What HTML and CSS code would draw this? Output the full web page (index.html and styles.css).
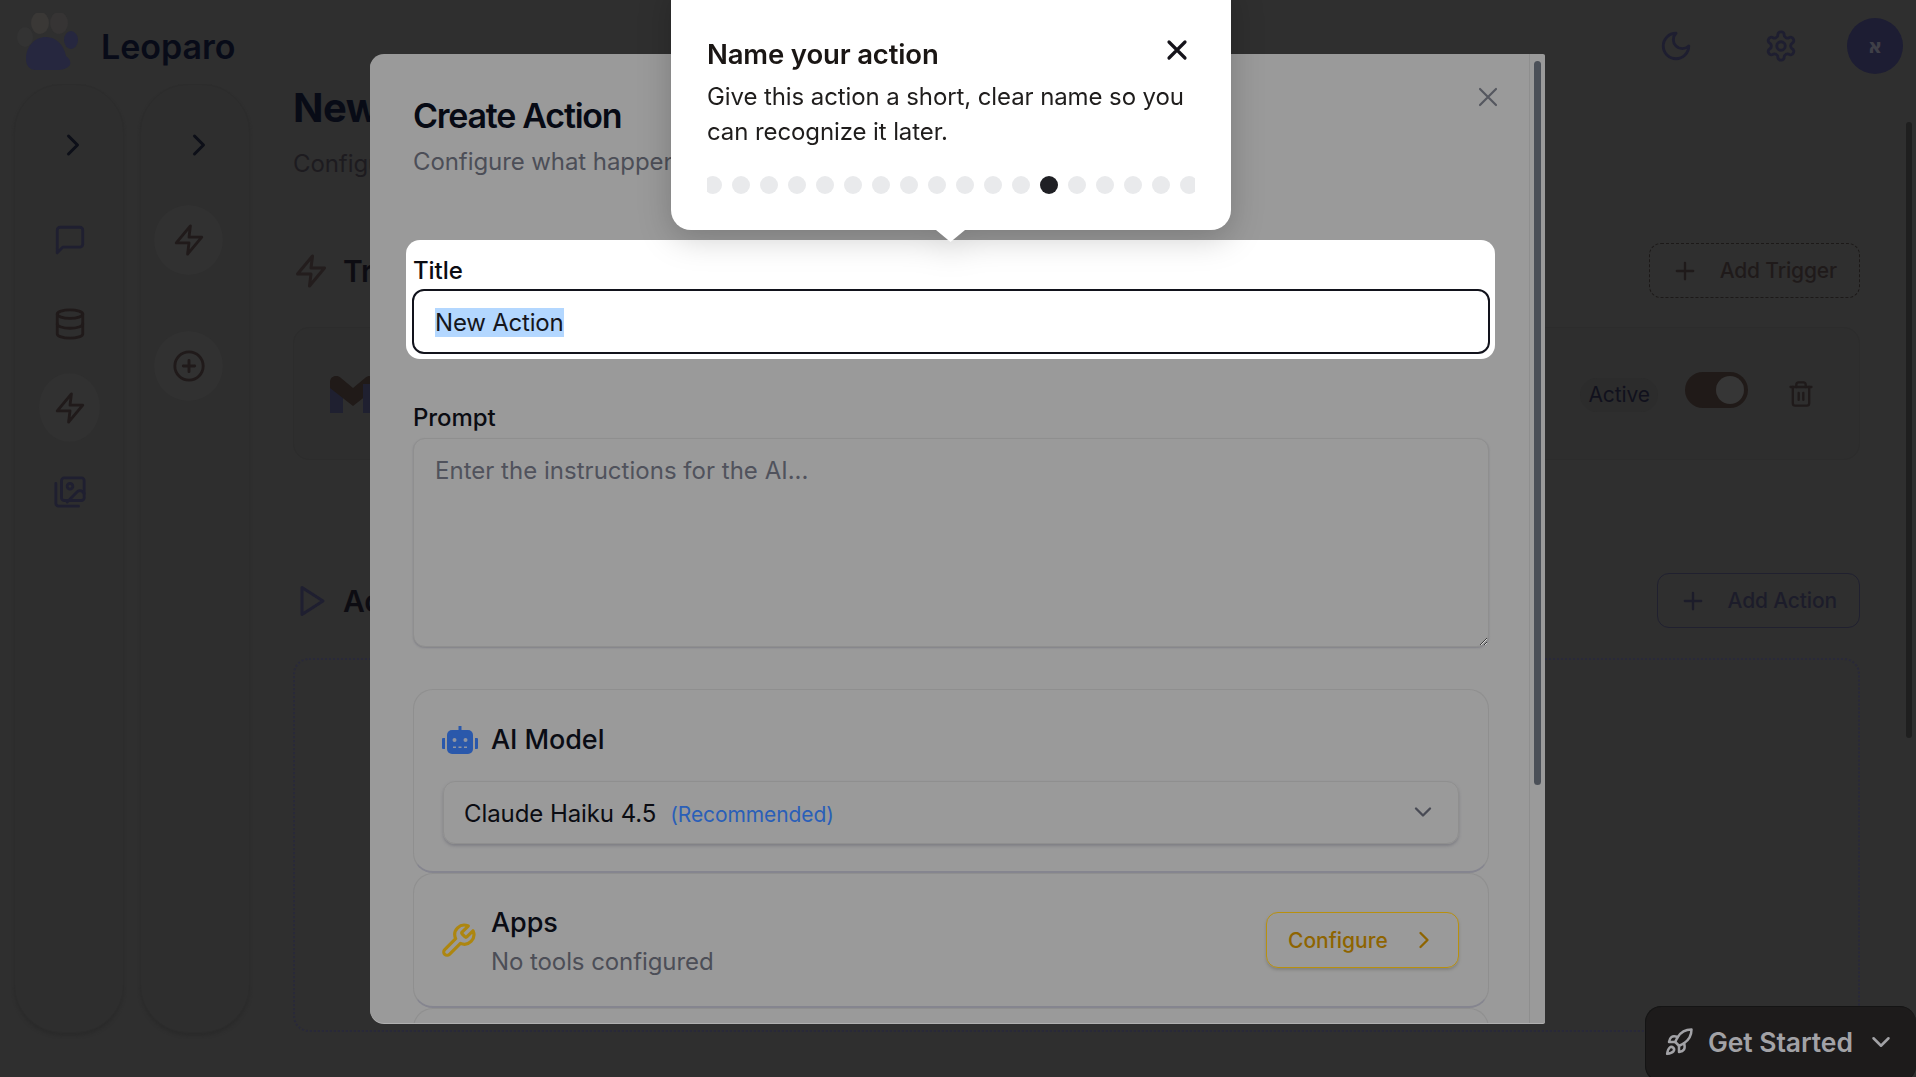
FILE: index.html
```html
<!DOCTYPE html>
<html lang="en">
<head>
<meta charset="utf-8">
<title>Leoparo - Create Action</title>
<link rel="stylesheet" href="styles.css">
</head>
<body>
<header class="topbar">
  <div class="brand">
    <svg class="paw" viewBox="0 0 62 58"><ellipse class="paw-dim" cx="9" cy="24" rx="8" ry="10"/><ellipse class="paw-toe" cx="24" cy="10" rx="9" ry="11"/><ellipse class="paw-toe2" cx="43" cy="10" rx="9" ry="11"/><ellipse class="paw-blue" cx="55" cy="27" rx="7" ry="9"/><path class="paw-blue" d="M10 46c0-13 9-22 20-22s18 9 20 19c4 3 5 6 4 9-3 4-8 5-14 5H20C13 57 10 52 10 46z"/></svg>
    <span class="brand-name">Leoparo</span>
  </div>
  <div class="top-actions">
    <svg class="icon top-icon" viewBox="0 0 24 24"><path d="M12 3a6 6 0 0 0 9 9 9 9 0 1 1-9-9Z"/></svg>
    <svg class="icon top-icon" viewBox="0 0 24 24"><path d="M12.22 2h-.44a2 2 0 0 0-2 2v.18a2 2 0 0 1-1 1.73l-.43.25a2 2 0 0 1-2 0l-.15-.08a2 2 0 0 0-2.73.73l-.22.38a2 2 0 0 0 .73 2.73l.15.1a2 2 0 0 1 1 1.72v.51a2 2 0 0 1-1 1.74l-.15.09a2 2 0 0 0-.73 2.73l.22.38a2 2 0 0 0 2.73.73l.15-.08a2 2 0 0 1 2 0l.43.25a2 2 0 0 1 1 1.73V20a2 2 0 0 0 2 2h.44a2 2 0 0 0 2-2v-.18a2 2 0 0 1 1-1.73l.43-.25a2 2 0 0 1 2 0l.15.08a2 2 0 0 0 2.73-.73l.22-.39a2 2 0 0 0-.73-2.73l-.15-.08a2 2 0 0 1-1-1.74v-.5a2 2 0 0 1 1-1.74l.15-.09a2 2 0 0 0 .73-2.73l-.22-.38a2 2 0 0 0-2.73-.73l-.15.08a2 2 0 0 1-2 0l-.43-.25a2 2 0 0 1-1-1.73V4a2 2 0 0 0-2-2z"/><circle cx="12" cy="12" r="3"/></svg>
    <div class="avatar">א</div>
  </div>
</header>

<div class="layout">
  <nav class="rail rail-first">
    <svg class="icon rail-toggle" viewBox="0 0 24 24"><path d="m9 18 6-6-6-6"/></svg>
    <div class="rail-items">
      <span class="rail-item"><svg class="icon" viewBox="0 0 24 24"><path d="M21 15a2 2 0 0 1-2 2H7l-4 4V5a2 2 0 0 1 2-2h14a2 2 0 0 1 2 2z"/></svg></span>
      <span class="rail-item rail-item-warm"><svg class="icon" viewBox="0 0 24 24"><ellipse cx="12" cy="5" rx="9" ry="3"/><path d="M3 5v14a9 3 0 0 0 18 0V5"/><path d="M3 12a9 3 0 0 0 18 0"/></svg></span>
      <span class="rail-item rail-item-warm is-active"><svg class="icon" viewBox="0 0 24 24"><path d="M13 2 3 14h9l-1 8 10-12h-9l1-8z"/></svg></span>
      <span class="rail-item"><svg class="icon" viewBox="0 0 24 24"><path d="M18 22H4a2 2 0 0 1-2-2V6"/><path d="m22 13-1.3-1.3a2.4 2.4 0 0 0-3.4 0L10 19"/><circle cx="12" cy="8" r="2"/><rect x="6" y="2" width="16" height="16" rx="2"/></svg></span>
    </div>
  </nav>
  <nav class="rail rail-second">
    <svg class="icon rail-toggle" viewBox="0 0 24 24"><path d="m9 18 6-6-6-6"/></svg>
    <div class="rail-items rail-items-wide">
      <span class="rail-item rail-item-warm rail-item-round is-active"><svg class="icon" viewBox="0 0 24 24"><path d="M13 2 3 14h9l-1 8 10-12h-9l1-8z"/></svg></span>
      <span class="rail-item rail-item-warm rail-item-round is-active"><svg class="icon" viewBox="0 0 24 24"><circle cx="12" cy="12" r="10"/><path d="M8 12h8M12 8v8"/></svg></span>
    </div>
  </nav>

  <main class="main">
    <h1 class="page-title">New Action</h1>
    <p class="page-sub">Configure your automation</p>

    <section class="section-head section-trigger">
      <div class="section-name">
        <svg class="icon section-icon" viewBox="0 0 24 24"><path d="M13 2 3 14h9l-1 8 10-12h-9l1-8z"/></svg>
        <h2>Triggers</h2>
      </div>
      <button class="add-btn add-trigger"><svg class="icon" viewBox="0 0 24 24"><path d="M5 12h14M12 5v14"/></svg>Add Trigger</button>
    </section>

    <div class="trigger-card">
      <svg class="gmail" viewBox="0 0 46 37"><path class="gmail-blue" d="M0 8h13v29H0z"/><path class="gmail-red" d="M0 6c0-6 7-8 11-4l12 10L35 2c4-4 11-2 11 4v6L23 30 0 12z"/><path class="gmail-blue" d="M33 8h13v29H33z"/></svg>
      <div class="trigger-controls">
        <span class="status-pill">Active</span>
        <span class="switch"><span class="switch-knob"></span></span>
        <svg class="icon trash" viewBox="0 0 24 24"><path d="M3 6h18"/><path d="M19 6v14a2 2 0 0 1-2 2H7a2 2 0 0 1-2-2V6"/><path d="M8 6V4a2 2 0 0 1 2-2h4a2 2 0 0 1 2 2v2"/><path d="M10 11v6M14 11v6"/></svg>
      </div>
    </div>

    <section class="section-head section-actions">
      <div class="section-name">
        <svg class="icon section-icon section-icon-blue" viewBox="0 0 24 24"><path d="M6 3l14 9-14 9z"/></svg>
        <h2>Actions</h2>
      </div>
      <button class="add-btn add-action"><svg class="icon" viewBox="0 0 24 24"><path d="M5 12h14M12 5v14"/></svg>Add Action</button>
    </section>

    <div class="empty-actions"></div>
  </main>
</div>

<div class="page-scroll"></div>

<aside class="get-started">
  <svg class="icon rocket" viewBox="0 0 24 24"><path d="M4.5 16.5c-1.5 1.26-2 5-2 5s3.74-.5 5-2c.71-.84.7-2.13-.09-2.91a2.18 2.18 0 0 0-2.91-.09z"/><path d="m12 15-3-3a22 22 0 0 1 2-3.95A12.88 12.88 0 0 1 22 2c0 2.72-.78 7.5-6 11a22.35 22.35 0 0 1-4 2z"/><path d="M9 12H4s.55-3.03 2-4c1.62-1.08 5 0 5 0"/><path d="M12 15v5s3.03-.55 4-2c1.08-1.62 0-5 0-5"/></svg>
  <span>Get Started</span>
  <svg class="icon gs-chevron" viewBox="0 0 24 24"><path d="m6 9 6 6 6-6"/></svg>
</aside>

<div class="modal">
  <div class="modal-body">
    <h2 class="modal-title">Create Action</h2>
    <p class="modal-sub">Configure what happens when this action runs</p>

    <div class="spotlight">
      <div class="field-label">Title</div>
      <div class="title-input"><span class="selected">New Action</span></div>
    </div>

    <div class="field-label prompt-label">Prompt</div>
    <textarea class="prompt" placeholder="Enter the instructions for the AI..."></textarea>

    <section class="option-card model-card">
      <div class="model-head">
        <svg class="robot" viewBox="0 0 36 28"><path class="robot-fill" d="M16.5 0h3v4h-3zM0 13a1 1 0 0 1 1-1h2v11H1a1 1 0 0 1-1-1zM33 12h2a1 1 0 0 1 1 1v9a1 1 0 0 1-1 1h-2z"/><rect class="robot-fill" x="5" y="4" width="26" height="24" rx="5"/><circle class="robot-face" cx="12.5" cy="14" r="2"/><circle class="robot-face" cx="23.5" cy="14" r="2"/><path class="robot-face" d="M11 20.5h3v1.5h-3zM16.5 20.5h3v1.5h-3zM22 20.5h3v1.5h-3z"/></svg>
        <span class="option-name">AI Model</span>
      </div>
      <div class="model-select">
        <span class="model-name">Claude Haiku 4.5</span>
        <span class="model-tag">(Recommended)</span>
        <svg class="icon select-chevron" viewBox="0 0 24 24"><path d="m6 9 6 6 6-6"/></svg>
      </div>
    </section>

    <section class="option-card apps-card">
      <svg class="icon wrench" viewBox="0 0 24 24"><path d="M14.7 6.3a1 1 0 0 0 0 1.4l1.6 1.6a1 1 0 0 0 1.4 0l3.77-3.77a6 6 0 0 1-7.94 7.94l-6.91 6.91a2.12 2.12 0 0 1-3-3l6.91-6.91a6 6 0 0 1 7.94-7.94l-3.76 3.76z"/></svg>
      <div class="apps-text">
        <div class="option-name">Apps</div>
        <div class="apps-sub">No tools configured</div>
      </div>
      <button class="configure">Configure<svg class="icon" viewBox="0 0 24 24"><path d="m9 18 6-6-6-6"/></svg></button>
    </section>

    <section class="option-card next-card"></section>
  </div>
  <svg class="icon modal-close" viewBox="0 0 24 24"><path d="M18 6 6 18M6 6l12 12"/></svg>
  <div class="modal-scroll"></div>
</div>

<div class="tour">
  <h3 class="tour-title">Name your action</h3>
  <p class="tour-text">Give this action a short, clear name so you can recognize it later.</p>
  <div class="tour-dots">
    <i></i><i></i><i></i><i></i><i></i><i></i><i></i><i></i><i></i><i></i><i></i><i></i><i class="on"></i><i></i><i></i><i></i><i></i><i></i>
  </div>
  <svg class="icon tour-close" viewBox="0 0 24 24"><path d="M18 6 6 18M6 6l12 12"/></svg>
</div>
</body>
</html>
```

FILE: styles.css
```css
* { box-sizing: border-box; }

html, body { margin: 0; height: 1077px; overflow: hidden; }

body {
  position: relative;
  background: #2f2f2f;
  font-family: Inter, "Noto Sans", "Liberation Sans", sans-serif;
  letter-spacing: -0.08px;
  color: #0a0c14;
}

h1, h2, h3, p { margin: 0; }

.icon {
  fill: none;
  stroke: currentColor;
  stroke-width: 2;
  stroke-linecap: round;
  stroke-linejoin: round;
  flex: none;
}

/* top bar */
.topbar {
  height: 84px;
  display: flex;
  align-items: center;
  justify-content: space-between;
  padding: 8px 13px 0 16px;
}
.brand { display: flex; align-items: center; gap: 23px; }
.paw { width: 62px; height: 58px; margin-bottom: 8px; }
.paw-dim { fill: #333333; }
.paw-toe { fill: #3a3836; }
.paw-toe2 { fill: #363434; }
.paw-blue { fill: #26273f; }
.brand-name { font-size: 34px; font-weight: 600; color: #080b18; letter-spacing: 0; }

.top-actions { display: flex; align-items: center; }
.top-icon { width: 34px; height: 34px; color: #1e1e30; margin-right: 71px; }
.top-icon + .avatar { margin-left: -22px; }
.avatar {
  width: 56px;
  height: 56px;
  border-radius: 50%;
  background: #1d1d33;
  color: #3f3f47;
  display: flex;
  align-items: center;
  justify-content: center;
  font: 600 20px "DejaVu Sans", sans-serif;
}

/* layout */
.layout { display: flex; padding-left: 14px; }

.rail {
  width: 110px;
  height: 949px;
  flex: none;
  padding-top: 36px;
  border: 1px solid #2c2c2c;
  border-radius: 48px;
  background: #2e2e2e;
  box-shadow: 0 3px 3px #2b2b2b;
}
.rail-second { margin-left: 16px; }
.rail-toggle { display: block; width: 36px; height: 48px; margin-left: 40px; color: #0d0f18; }

.rail-items { display: flex; flex-direction: column; gap: 15px; margin: 36px 0 0 24px; }
.rail-item {
  width: 61px;
  height: 69px;
  border-radius: 50%;
  display: flex;
  align-items: center;
  justify-content: center;
  color: #1f1f30;
}
.rail-item .icon { width: 34px; height: 34px; }
.rail-item-warm { color: #201a1a; }
.rail-item.is-active { background: #313131; }
.rail-items-wide { gap: 56px; margin-left: 13px; }
.rail-item-round { width: 69px; height: 70px; }

/* main */
.main { width: 1567px; margin-left: 43px; flex: none; }
.page-title { font-size: 40px; line-height: 48px; font-weight: 700; color: #080b16; letter-spacing: -0.5px; }
.page-sub { font-size: 24px; line-height: 32px; margin-top: 16px; color: #1d1b1f; }

.section-head { display: flex; align-items: center; justify-content: space-between; height: 55px; }
.section-trigger { margin-top: 63px; }
.section-actions { margin-top: 113px; }
.section-name { display: flex; align-items: center; gap: 14px; }
.section-name h2 { font-size: 30px; font-weight: 600; color: #0d0c12; }
.section-icon { width: 36px; height: 36px; color: #231d1d; }
.section-icon-blue { color: #1f1f30; }

.add-btn {
  height: 55px;
  display: flex;
  align-items: center;
  gap: 21px;
  padding: 0 22px 0 21px;
  border-radius: 12px;
  background: transparent;
  font: 500 21px Inter, sans-serif;
  letter-spacing: -0.15px;
}
.add-btn .icon { width: 28px; height: 28px; }
.add-trigger { border: 1px dashed #1c1918; color: #1f1a1a; }
.add-action { border: 1px solid #20202f; color: #1c1c2a; }

.trigger-card {
  height: 133px;
  margin-top: 29px;
  padding: 0 44px 0 36px;
  display: flex;
  align-items: center;
  justify-content: space-between;
  border: 1px solid #2c2c2c;
  border-radius: 16px;
  background: #2e2e2e;
}
.gmail { width: 46px; height: 37px; margin-top: 1px; }
.gmail-blue { fill: #1f2030; }
.gmail-red { fill: #201a18; }

.trigger-controls { display: flex; align-items: center; }
.status-pill {
  height: 34px;
  margin-top: 2px;
  padding: 0 8px;
  display: flex;
  align-items: center;
  border-radius: 17px;
  background: #2c2c2c;
  font-size: 21px;
  color: #11111d;
}
.switch {
  width: 63px;
  height: 36px;
  margin: -8px 0 0 27px;
  padding: 4px;
  display: flex;
  justify-content: flex-end;
  border-radius: 18px;
  background: #201a18;
}
.switch-knob { width: 28px; height: 28px; border-radius: 50%; background: #363636; }
.trash { width: 28px; height: 32px; margin-left: 39px; color: #1f1a1a; }

.empty-actions {
  height: 374px;
  margin-top: 30px;
  border: 2px dotted #29293a;
  border-radius: 16px;
}

.page-scroll {
  position: absolute;
  top: 122px;
  right: 4px;
  width: 6px;
  height: 616px;
  border-radius: 3px;
  background: #1f1f1f;
}

.get-started {
  position: absolute;
  right: 0;
  bottom: -5px;
  width: 271px;
  height: 76px;
  padding: 0 20px 4px 18px;
  display: flex;
  align-items: center;
  border: 1px solid #141414;
  border-right: 0;
  border-radius: 16px;
  background: #1d1b1b;
  color: #a2a2a6;
  font-size: 26.5px;
  font-weight: 600;
}
.rocket { width: 30px; height: 30px; margin-right: 14px; }
.gs-chevron { width: 30px; height: 30px; margin-left: auto; }

/* modal */
.modal {
  position: absolute;
  top: 54px;
  left: 370px;
  width: 1175px;
  height: 969px;
  overflow: hidden;
  border-radius: 14px 2px 2px 14px;
  background: #9a9a9a;
  box-shadow: 0 1px 0 #b0b0b0;
  z-index: 10;
}
.modal-body { padding: 40px 0 0 43px; width: 1119px; }
.modal-title { font-size: 34px; line-height: 44px; font-weight: 600; color: #070a14; letter-spacing: -1.25px; }
.modal-sub { font-size: 24px; line-height: 32px; margin-top: 8px; color: #4c4e57; }

.spotlight {
  width: 1089px;
  height: 119px;
  margin: 62px 0 0 -7px;
  padding: 16px 5px 5px 6px;
  border-radius: 14px;
  background: #fff;
}
.spotlight .field-label { margin-left: 1px; margin-bottom: 3px; }
.field-label { font-size: 24px; line-height: 30px; font-weight: 500; color: #0b0c12; }

.title-input {
  height: 65px;
  padding: 2px 21px 0;
  display: flex;
  align-items: center;
  border: 2px solid #12131c;
  border-radius: 12px;
  background: #fff;
  font-size: 24px;
  letter-spacing: -0.2px;
  color: #15161c;
}
.selected { background: #b3d7ff; line-height: 29px; }

.prompt-label { margin-top: 44px; }
.prompt {
  display: block;
  width: 1076px;
  height: 209px;
  margin-top: 5px;
  padding: 17px 21px;
  border: 1px solid #8f8f8f;
  border-radius: 12px;
  background: #9a9a9a;
  box-shadow: 0 1px 2px #828288;
  font: 24px Inter, sans-serif;
  letter-spacing: 0.02px;
  outline: none;
}
.prompt::placeholder { color: #50525c; opacity: 1; }

.option-card {
  width: 1076px;
  border: 1px solid #8f8f8f;
  border-bottom: 2px solid #85858f;
  border-radius: 20px;
  background: #9a9a9a;
}
.model-card { height: 184px; margin-top: 42px; padding: 35px 29px 0 28px; }
.model-head { display: flex; align-items: center; gap: 13px; height: 30px; }
.robot { width: 36px; height: 28px; flex: none; }
.robot-fill { fill: #2a58ab; }
.robot-face { fill: #8f95a3; }
.option-name { font-size: 27px; line-height: 34px; font-weight: 500; color: #0a0c14; }

.model-select {
  height: 63px;
  margin: 26px 0 0 1px;
  padding: 2px 20px 0 20px;
  display: flex;
  align-items: center;
  border: 1px solid #8f8f8f;
  border-radius: 12px;
  box-shadow: 0 2px 3px #7f7f85;
}
.model-name { font-size: 24px; color: #0b0c12; }
.model-tag { font-size: 21px; margin: 2px 0 0 14px; color: #2a5fb8; letter-spacing: -0.1px; }
.select-chevron { width: 28px; height: 28px; margin: -4px 1px 0 auto; color: #494b55; }

.apps-card {
  height: 135px;
  padding: 0 29px 0 25px;
  display: flex;
  align-items: center;
}
.wrench { width: 38px; height: 38px; color: #ad8610; margin-top: 2px; }
.apps-text { margin-left: 14px; margin-top: 2px; }
.apps-sub { font-size: 24px; line-height: 30px; margin-top: 7px; color: #4c4e57; }
.configure {
  width: 193px;
  height: 56px;
  margin-left: auto;
  padding: 0 20px 0 21px;
  display: flex;
  align-items: center;
  justify-content: space-between;
  border: 1px solid #b8900f;
  border-radius: 12px;
  background: transparent;
  box-shadow: 0 2px 3px #82827f;
  font: 500 21px Inter, sans-serif;
  color: #8e6400;
}
.configure .icon { width: 28px; height: 28px; }
.next-card { height: 60px; }

.modal-close { position: absolute; top: 27px; left: 1102px; width: 32px; height: 32px; color: #55575f; stroke-width: 1.6; }
.modal-scroll {
  position: absolute;
  top: 7px;
  right: 4px;
  width: 7px;
  height: 724px;
  border-radius: 4px;
  background: #4b5058;
}
.modal::after {
  content: "";
  position: absolute;
  top: 0;
  bottom: 0;
  right: 15px;
  width: 1px;
  background: #8e8e8e;
}

/* tour popover */
.tour {
  position: absolute;
  top: -20px;
  left: 671px;
  width: 560px;
  height: 250px;
  padding: 54px 36px 0;
  border-radius: 20px;
  background: #fff;
  filter: drop-shadow(0 8px 16px rgba(0, 0, 0, 0.2));
  z-index: 20;
}
.tour::after {
  content: "";
  position: absolute;
  left: 265px;
  bottom: -12px;
  width: 29px;
  height: 12px;
  background: #fff;
  clip-path: polygon(0 0, 100% 0, 50% 100%);
}
.tour-title { font-size: 27.5px; line-height: 40px; font-weight: 600; color: #1a1614; letter-spacing: -0.15px; }
.tour-text { font-size: 24px; line-height: 35px; margin-top: 5px; color: #1f1d1c; letter-spacing: -0.1px; }
.tour-dots {
  margin-top: 27px;
  height: 18px;
  display: flex;
  justify-content: center;
  gap: 10px;
  overflow: hidden;
}
.tour-dots i { width: 18px; height: 18px; flex: none; border-radius: 50%; background: #e9eaec; }
.tour-dots i.on { background: #1f2024; }
.tour-close { position: absolute; top: 54px; left: 490px; width: 32px; height: 32px; color: #15131a; stroke-width: 2.4; }
```
